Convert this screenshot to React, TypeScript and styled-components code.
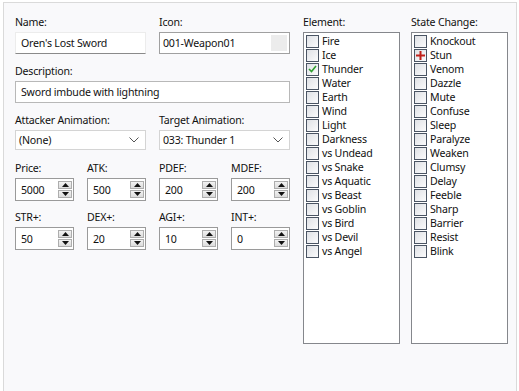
import styled, { createGlobalStyle } from "styled-components";

const GlobalStyle = createGlobalStyle`
  html, body {
    margin: 0;
    padding: 0;
    background: #ffffff;
  }
  body {
    font-family: "Noto Sans", "Open Sans", "DejaVu Sans", sans-serif;
    font-size: 10.6px;
    letter-spacing: -0.2px;
    color: #111;
  }
`;

const elements = [
  "Fire", "Ice", "Thunder", "Water", "Earth", "Wind", "Light", "Darkness",
  "vs Undead", "vs Snake", "vs Aquatic", "vs Beast", "vs Goblin", "vs Bird",
  "vs Devil", "vs Angel",
];

const states = [
  "Knockout", "Stun", "Venom", "Dazzle", "Mute", "Confuse", "Sleep", "Paralyze",
  "Weaken", "Clumsy", "Delay", "Feeble", "Sharp", "Barrier", "Resist", "Blink",
];

const Frame = styled.div`
  margin: 2px 2px 0 3px;
  height: 389px;
  border: 1px solid #dadada;
  border-bottom: none;
  background: #f9f9fb;
  box-sizing: border-box;
  display: flex;
  padding: 0 0 0 11px;
`;

const LeftPane = styled.div`
  width: 277px;
  display: flex;
  flex-direction: column;
`;

const Row = styled.div<{ $top: number }>`
  display: grid;
  grid-template-columns: repeat(4, 59px);
  column-gap: 13px;
  margin-top: ${({ $top }) => $top}px;
`;

const Field = styled.div<{ $span?: number }>`
  display: flex;
  flex-direction: column;
  grid-column: span ${({ $span }) => $span ?? 1};
`;

const Label = styled.label`
  line-height: 16px;
  height: 16px;
  margin-bottom: 2px;
  white-space: nowrap;
`;

const TextBox = styled.div<{ $flat?: boolean }>`
  height: 22px;
  box-sizing: border-box;
  background: #fff;
  border: 1px solid ${({ $flat }) => ($flat ? "#ececec" : "#b8b8b8")};
  border-bottom-color: ${({ $flat }) => ($flat ? "#8a8a8a" : "#b8b8b8")};
  padding: 0 5px;
  display: flex;
  align-items: center;
  white-space: nowrap;
`;

const IconBox = styled(TextBox)`
  border-color: #a0a0a0;
  padding: 0 2px 0 3px;
  justify-content: space-between;
`;

const IconButton = styled.div`
  width: 16px;
  height: 16px;
  background: #ececec;
`;

const Select = styled.div`
  height: 20px;
  box-sizing: border-box;
  background: #fff;
  border: 1px solid #d4d4d4;
  padding: 0 6px 0 3px;
  display: flex;
  align-items: center;
  justify-content: space-between;
  white-space: nowrap;
`;

const Chevron = () => (
  <svg width="10" height="6" viewBox="0 0 10 6">
    <path d="M0.5 0.5 L5 5 L9.5 0.5" fill="none" stroke="#555" strokeWidth="1" />
  </svg>
);

const Spin = styled.div`
  height: 23px;
  box-sizing: border-box;
  background: #fff;
  border: 1px solid #9a9a9a;
  display: flex;
  align-items: center;
  justify-content: space-between;
  padding: 0 1px 0 5px;
`;

const SpinButtons = styled.div`
  display: flex;
  flex-direction: column;
  gap: 1px;
`;

const SpinButton = styled.div`
  width: 14px;
  height: 8px;
  box-sizing: border-box;
  border: 1px solid #adadad;
  background: linear-gradient(#f2f2f2, #dcdcdc);
  display: flex;
  align-items: center;
  justify-content: center;
`;

const Arrow = ({ up }: { up?: boolean }) => (
  <svg width="7" height="4" viewBox="0 0 7 4">
    <path d={up ? "M0 4 L3.5 0 L7 4 Z" : "M0 0 L3.5 4 L7 0 Z"} fill="#111" />
  </svg>
);

const Spinner = ({ value }: { value: string }) => (
  <Spin>
    <span>{value}</span>
    <SpinButtons>
      <SpinButton>
        <Arrow up />
      </SpinButton>
      <SpinButton>
        <Arrow />
      </SpinButton>
    </SpinButtons>
  </Spin>
);

const ListColumn = styled.div`
  display: flex;
  flex-direction: column;
  width: 97px;
  margin: 11px 0 0 11px;
`;

const ListBox = styled.div`
  height: 312px;
  box-sizing: border-box;
  border: 1px solid #85878c;
  background: #fff;
  padding: 1px 2px;
`;

const ListItem = styled.div`
  height: 14px;
  display: flex;
  align-items: center;
  gap: 3px;
  white-space: nowrap;
`;

const Box = styled.div`
  width: 13px;
  height: 13px;
  box-sizing: border-box;
  border: 1px solid #4a5463;
  background: linear-gradient(135deg, #dfe1e5, #fbfbfc);
  display: flex;
  align-items: center;
  justify-content: center;
  flex-shrink: 0;
`;

const Check = () => (
  <svg width="9" height="8" viewBox="0 0 9 8">
    <path d="M1 4 L3.5 6.5 L8 1" fill="none" stroke="#2f9e2f" strokeWidth="1.6" />
  </svg>
);

const Plus = () => (
  <svg width="9" height="9" viewBox="0 0 9 9">
    <rect x="3.5" y="0" width="2" height="9" fill="#c0201a" />
    <rect x="0" y="3.5" width="9" height="2" fill="#c0201a" />
  </svg>
);

const CheckList = ({
  title,
  items,
  marks,
}: {
  title: string;
  items: string[];
  marks: Record<string, "check" | "plus">;
}) => (
  <ListColumn>
    <Label>{title}</Label>
    <ListBox>
      {items.map((item) => (
        <ListItem key={item}>
          <Box>
            {marks[item] === "check" && <Check />}
            {marks[item] === "plus" && <Plus />}
          </Box>
          <span>{item}</span>
        </ListItem>
      ))}
    </ListBox>
  </ListColumn>
);

export default function App() {
  return (
    <>
      <GlobalStyle />
      <Frame>
        <LeftPane>
          <Row $top={11}>
            <Field $span={2}>
              <Label>Name:</Label>
              <TextBox $flat>Oren's Lost Sword</TextBox>
            </Field>
            <Field $span={2}>
              <Label>Icon:</Label>
              <IconBox>
                <span>001-Weapon01</span>
                <IconButton />
              </IconBox>
            </Field>
          </Row>
          <Row $top={9}>
            <Field $span={4}>
              <Label>Description:</Label>
              <TextBox>Sword imbude with lightning</TextBox>
            </Field>
          </Row>
          <Row $top={9}>
            <Field $span={2}>
              <Label>Attacker Animation:</Label>
              <Select>
                <span>(None)</span>
                <Chevron />
              </Select>
            </Field>
            <Field $span={2}>
              <Label>Target Animation:</Label>
              <Select>
                <span>033: Thunder 1</span>
                <Chevron />
              </Select>
            </Field>
          </Row>
          <Row $top={10}>
            {[
              ["Price:", "5000"],
              ["ATK:", "500"],
              ["PDEF:", "200"],
              ["MDEF:", "200"],
            ].map(([label, value]) => (
              <Field key={label}>
                <Label>{label}</Label>
                <Spinner value={value} />
              </Field>
            ))}
          </Row>
          <Row $top={8}>
            {[
              ["STR+:", "50"],
              ["DEX+:", "20"],
              ["AGI+:", "10"],
              ["INT+:", "0"],
            ].map(([label, value]) => (
              <Field key={label}>
                <Label>{label}</Label>
                <Spinner value={value} />
              </Field>
            ))}
          </Row>
        </LeftPane>
        <CheckList title="Element:" items={elements} marks={{ Thunder: "check" }} />
        <CheckList title="State Change:" items={states} marks={{ Stun: "plus" }} />
      </Frame>
    </>
  );
}
